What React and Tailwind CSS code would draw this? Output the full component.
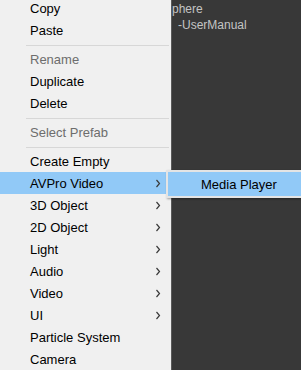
import React from 'react';

const items = [
  { label: 'Copy' },
  { label: 'Paste' },
  { sep: true },
  { label: 'Rename', disabled: true },
  { label: 'Duplicate' },
  { label: 'Delete' },
  { sep: true },
  { label: 'Select Prefab', disabled: true },
  { sep: true },
  { label: 'Create Empty' },
  { label: 'AVPro Video', sub: true, active: true },
  { label: '3D Object', sub: true },
  { label: '2D Object', sub: true },
  { label: 'Light', sub: true },
  { label: 'Audio', sub: true },
  { label: 'Video', sub: true },
  { label: 'UI', sub: true },
  { label: 'Particle System' },
  { label: 'Camera' },
];

function Chevron() {
  return (
    <svg width="6" height="9" viewBox="0 0 6 9" className="absolute left-[155px] top-[7px]">
      <polyline points="1.5,1 4.5,4.5 1.5,8" fill="none" stroke="#3a3a3a" strokeWidth="1.2" />
    </svg>
  );
}

export default function App() {
  return (
    <div className="relative flex w-[301px] h-[370px] overflow-hidden bg-[#383838] font-['Liberation_Sans',Arial,sans-serif]">
      <div className="w-[172px] shrink-0 h-full bg-[#f0f0f0] border-r border-[#5a5a5a]">
        <div className="mt-[-3px]">
          {items.map((it, i) =>
            it.sep ? (
              <div key={i} className="pt-[4px] pb-[2px] pl-[26px] pr-[2px]">
                <div className="h-px bg-[#d7d7d7]" />
              </div>
            ) : (
              <div
                key={i}
                className={
                  'relative h-[22px] flex items-center pt-[2px] pl-[30px] text-[13px] ' +
                  (it.active ? 'bg-[#91c9f7] ' : '') +
                  (it.disabled ? 'text-[#6d6d6d]' : 'text-black')
                }
              >
                {it.label}
                {it.sub && <Chevron />}
              </div>
            )
          )}
        </div>
      </div>
      <div className="flex-1 pt-[1px] text-[12px] leading-[16px] text-[#c4c4c4] whitespace-nowrap">
        <div>phere</div>
        <div className="pl-[6px]">-UserManual</div>
      </div>
      <div className="absolute left-[166px] top-[170px] w-[150px] h-[28px] border-2 border-[#e4e4e4] bg-[#91c9f7] shadow-[1px_1px_2px_rgba(0,0,0,0.35)] flex items-center pt-[1px] pl-[33px] text-[13px] text-black">
        Media Player
      </div>
    </div>
  );
}
